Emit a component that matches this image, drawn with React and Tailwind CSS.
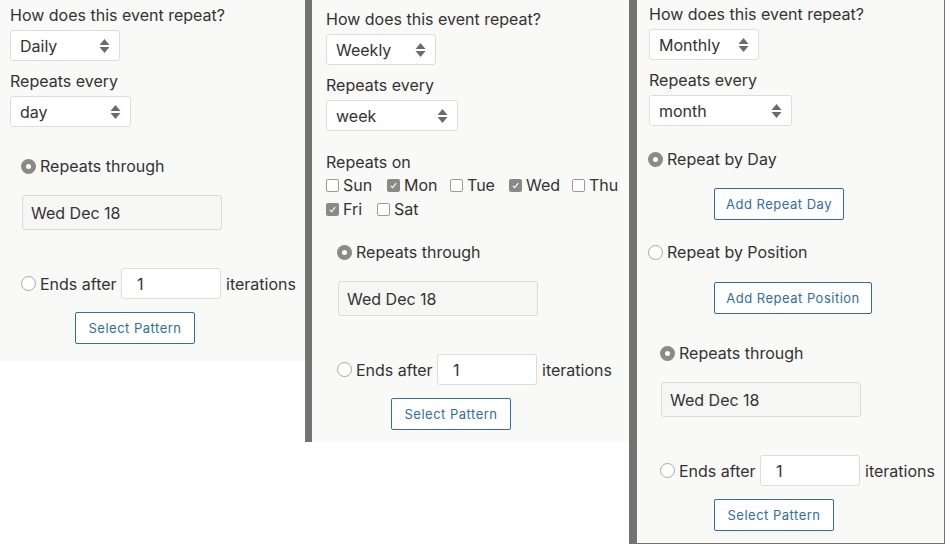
import React from 'react';

function UpDown() {
  return (
    <svg width="11" height="16" viewBox="0 0 11 16" className="shrink-0">
      <path d="M5.5 1 L10.5 7 L0.5 7 Z" fill="#6b6b6b" />
      <path d="M5.5 15 L10.5 9 L0.5 9 Z" fill="#6b6b6b" />
    </svg>
  );
}

function Select({ value, className }) {
  return (
    <div className={`h-[31px] bg-white border border-[#dcdcdc] rounded-[3px] flex items-center justify-between pl-[9px] pr-[9px] ${className}`}>
      <span>{value}</span>
      <UpDown />
    </div>
  );
}

function Radio({ checked }) {
  if (checked) {
    return (
      <span className="w-[15px] h-[15px] rounded-full bg-[#8a8a8a] flex items-center justify-center shrink-0">
        <span className="w-[5px] h-[5px] rounded-full bg-white" />
      </span>
    );
  }
  return <span className="w-[15px] h-[15px] rounded-full bg-white border border-[#a8a8a8] shrink-0" />;
}

function Check({ checked }) {
  if (checked) {
    return (
      <span className="w-[13px] h-[13px] rounded-[2px] bg-[#8a8a8a] flex items-center justify-center shrink-0">
        <svg width="9" height="9" viewBox="0 0 9 9">
          <path d="M1.8 4.8 L3.6 6.6 L7.2 2.2" stroke="#fff" strokeWidth="1.1" fill="none" />
        </svg>
      </span>
    );
  }
  return <span className="w-[13px] h-[13px] rounded-[2px] bg-white border border-[#9a9a9a] shrink-0" />;
}

function OutlineButton({ label, className }) {
  return (
    <div className={`h-[32px] border border-[#2f6fa3] rounded-[2px] bg-white text-[#2f6fa3] text-[13px] tracking-[0.5px] flex items-center justify-center ${className}`}>
      {label}
    </div>
  );
}

function DateBox({ className }) {
  return (
    <div className={`w-[200px] h-[35px] bg-[#f6f6f4] border border-[#dadada] rounded-[3px] flex items-center pl-[8px] ${className}`}>
      Wed Dec 18
    </div>
  );
}

function EndsRow({ className }) {
  return (
    <div className={`flex items-center h-[31px] ${className}`}>
      <Radio />
      <span className="ml-[4px] w-[81px]">Ends after</span>
      <div className="w-[100px] h-[31px] bg-white border border-[#dcdcdc] rounded-[3px] flex items-center pl-[15px]">1</div>
      <span className="ml-[5px]">iterations</span>
    </div>
  );
}

function DayCheck({ day, checked, className }) {
  return (
    <div className={`flex items-center ${className}`}>
      <Check checked={checked} />
      <span className="ml-[4px]">{day}</span>
    </div>
  );
}

export default function App() {
  return (
    <div className="w-[945px] h-[544px] bg-white flex items-start text-[16px] leading-[24px] text-[#333333] font-['Inter','Liberation_Sans',sans-serif] overflow-hidden">
      {/* daily */}
      <div className="w-[305px] h-[361px] bg-[#f9f9f7] pl-[10px] pt-[3px]">
        <div>How does this event repeat?</div>
        <Select value="Daily" className="w-[110px] mt-[3px]" />
        <div className="mt-[8px]">Repeats every</div>
        <Select value="day" className="w-[121px] mt-[3px]" />
        <div className="flex items-center mt-[27px] ml-[11px]">
          <Radio checked />
          <span className="ml-[4px]">Repeats through</span>
        </div>
        <DateBox className="mt-[17px] ml-[12px]" />
        <EndsRow className="mt-[38px] ml-[11px]" />
        <OutlineButton label="Select Pattern" className="w-[120px] mt-[13px] ml-[65px]" />
      </div>

      {/* weekly */}
      <div className="w-[324px] h-[442px] bg-[#f9f9f7] border-l-[7px] border-[#737373] pl-[14px] pt-[7px]">
        <div>How does this event repeat?</div>
        <Select value="Weekly" className="w-[110px] mt-[3px]" />
        <div className="mt-[8px]">Repeats every</div>
        <Select value="week" className="w-[132px] mt-[3px]" />
        <div className="mt-[20px] leading-[22px]">Repeats on</div>
        <div className="flex items-center h-[24px]">
          <DayCheck day="Sun" className="w-[61px]" />
          <DayCheck day="Mon" checked className="w-[63px]" />
          <DayCheck day="Tue" className="w-[59px]" />
          <DayCheck day="Wed" checked className="w-[63px]" />
          <DayCheck day="Thu" />
        </div>
        <div className="flex items-center h-[24px]">
          <DayCheck day="Fri" checked className="w-[51px]" />
          <DayCheck day="Sat" />
        </div>
        <div className="flex items-center mt-[19px] ml-[11px]">
          <Radio checked />
          <span className="ml-[4px]">Repeats through</span>
        </div>
        <DateBox className="mt-[17px] ml-[12px]" />
        <EndsRow className="mt-[38px] ml-[11px]" />
        <OutlineButton label="Select Pattern" className="w-[120px] mt-[13px] ml-[65px]" />
      </div>

      {/* monthly */}
      <div className="w-[316px] h-[544px] bg-[#f9f9f7] border-l-[8px] border-r border-b border-[#737373] pl-[12px] pt-[2px]">
        <div>How does this event repeat?</div>
        <Select value="Monthly" className="w-[110px] mt-[3px]" />
        <div className="mt-[8px]">Repeats every</div>
        <Select value="month" className="w-[143px] mt-[3px]" />
        <div className="flex items-center mt-[21px] ml-[-1px]">
          <Radio checked />
          <span className="ml-[4px]">Repeat by Day</span>
        </div>
        <OutlineButton label="Add Repeat Day" className="w-[130px] mt-[17px] ml-[65px]" />
        <div className="flex items-center mt-[20px] ml-[-1px]">
          <Radio />
          <span className="ml-[4px]">Repeat by Position</span>
        </div>
        <OutlineButton label="Add Repeat Position" className="w-[158px] mt-[18px] ml-[65px]" />
        <div className="flex items-center mt-[27px] ml-[11px]">
          <Radio checked />
          <span className="ml-[4px]">Repeats through</span>
        </div>
        <DateBox className="mt-[17px] ml-[12px]" />
        <EndsRow className="mt-[38px] ml-[11px]" />
        <OutlineButton label="Select Pattern" className="w-[120px] mt-[13px] ml-[65px]" />
      </div>
    </div>
  );
}
